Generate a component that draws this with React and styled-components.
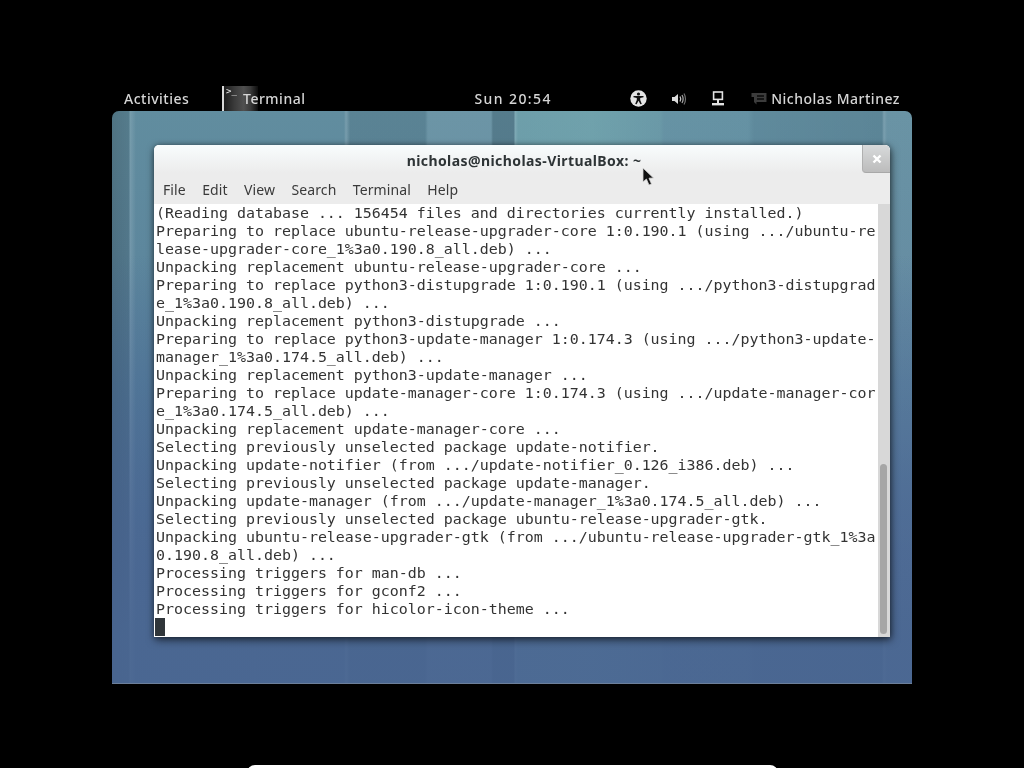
import React from 'react';
import styled, { createGlobalStyle } from 'styled-components';

const GlobalStyle = createGlobalStyle`
  html, body {
    margin: 0;
    padding: 0;
    background: #000;
    overflow: hidden;
  }
`;

const Screen = styled.div`
  position: relative;
  width: 1024px;
  height: 768px;
  background: #000;
  overflow: hidden;
  padding: 86px 112px 0;
  box-sizing: border-box;
  font-family: "Noto Sans", "Open Sans", sans-serif;
  filter: blur(0.3px);
`;

const TopBar = styled.div`
  display: flex;
  align-items: center;
  height: 25px;
  margin: 0 12px;
  color: #d6d6d6;
  font-size: 14px;
  font-weight: 500;
  letter-spacing: 0.5px;
`;

const BarLabel = styled.span`
  white-space: nowrap;
`;

const Activities = styled(BarLabel)`
  width: 65px;
`;

const AppButton = styled.div`
  display: flex;
  align-items: center;
  height: 25px;
  margin-left: 33px;
  width: 253px;
`;

const AppIcon = styled.div`
  width: 36px;
  height: 25px;
  margin-right: -15px;
  border-left: 2px solid #d8d8d8;
  box-sizing: border-box;
  background: linear-gradient(90deg, #1c1c1c 0%, #3a3a3a 30%, #505050 58%, #3a3a3a 78%, #0c0c0c 100%);
  color: #eee;
  font: 9px/9px "DejaVu Sans Mono", monospace;
  letter-spacing: 0;
  padding: 1px 0 0 2px;
`;

const Clock = styled(BarLabel)`
  width: 156px;
  letter-spacing: 1.4px;
`;

const StatusIcons = styled.div`
  display: flex;
  align-items: center;
  gap: 24px;
`;

const ChatGlyph = styled.svg`
  margin-left: 26px;
`;

const UserName = styled(BarLabel)`
  margin-left: 4px;
`;

const Desktop = styled.div`
  height: 573px;
  border-radius: 7px 7px 0 0;
  border-bottom: 1px solid #6c7f9a;
  padding: 34px 22px 0 42px;
  box-sizing: border-box;
  background:
    linear-gradient(180deg, rgba(74, 103, 146, 0) 25%, rgba(74, 103, 146, 0.55) 65%, rgba(74, 103, 146, 0.88) 92%),
    linear-gradient(90deg,
      rgba(0, 0, 0, 0.18) 0, rgba(0, 0, 0, 0.12) 17px,
      rgba(255, 255, 255, 0.14) 18px, rgba(255, 255, 255, 0) 24px,
      rgba(255, 255, 255, 0) 232px, rgba(255, 255, 255, 0.14) 234px,
      rgba(0, 0, 0, 0.07) 238px, rgba(0, 0, 0, 0.07) 313px,
      rgba(255, 255, 255, 0.07) 316px, rgba(255, 255, 255, 0.07) 379px,
      rgba(0, 0, 0, 0.12) 381px, rgba(0, 0, 0, 0.12) 402px,
      rgba(200, 240, 235, 0.3) 403px, rgba(150, 215, 205, 0.24) 406px,
      rgba(150, 215, 205, 0.28) 480px, rgba(150, 210, 205, 0.18) 548px,
      rgba(150, 200, 210, 0.1) 552px, rgba(150, 200, 210, 0.09) 636px,
      rgba(0, 0, 0, 0.02) 642px, rgba(0, 0, 0, 0.05) 770px,
      rgba(255, 255, 255, 0.16) 772px, rgba(255, 255, 255, 0.06) 775px,
      rgba(255, 255, 255, 0.06) 800px),
    linear-gradient(180deg, #618d9f 0%, #5d879d 25%, #527a99 50%, #4b6a94 78%, #4a658f 100%);
`;

const TermWindow = styled.div`
  width: 736px;
  height: 492px;
  border-radius: 5px 5px 0 0;
  background: #ececec;
  box-shadow: 1px 3px 9px rgba(0, 0, 0, 0.6), 0 0 5px rgba(0, 0, 0, 0.3);
  display: flex;
  flex-direction: column;
  overflow: hidden;
`;

const TitleBar = styled.div`
  position: relative;
  height: 28px;
  flex: none;
  display: flex;
  align-items: center;
  justify-content: center;
  background: linear-gradient(180deg, #f8fcfd 0%, #ececec 100%);
  color: #2e3436;
  font-size: 14px;
  font-weight: 700;
  letter-spacing: 0.42px;
  padding: 2px 0 0 4px;
  box-sizing: border-box;
`;

const CloseButton = styled.div`
  position: absolute;
  top: 0;
  right: 0;
  width: 28px;
  height: 28px;
  display: flex;
  align-items: center;
  justify-content: center;
  background: linear-gradient(180deg, #d8dadb 0%, #bcbcbc 100%);
  border-left: 1px solid #b0b0b0;
  border-bottom: 1px solid #a8a8a8;
  box-sizing: border-box;
  border-radius: 0 5px 0 4px;
`;

const MenuBar = styled.div`
  height: 31px;
  flex: none;
  display: flex;
  align-items: center;
  gap: 16.4px;
  padding: 2px 0 0 9px;
  box-sizing: border-box;
  color: #3a3a3a;
  font-size: 14px;
  letter-spacing: 0.1px;
`;

const Body = styled.div`
  flex: 1;
  display: flex;
  min-height: 0;
`;

const Output = styled.div`
  flex: 1;
  background: #fff;
  color: #333;
  font: 14.95px/18px "DejaVu Sans Mono", monospace;
  white-space: pre;
  padding: 0 0 0 2px;
  overflow: hidden;
`;

const Line = styled.div`
  height: 18px;
`;

const Caret = styled.div`
  width: 10px;
  height: 18px;
  margin-left: -1px;
  background: #30363a;
`;

const ScrollTrack = styled.div`
  width: 12px;
  flex: none;
  background: #d8d8d8;
  padding: 260px 3px 3px 2px;
  box-sizing: border-box;
`;

const ScrollThumb = styled.div`
  height: 100%;
  background: #a6a6a6;
  border-radius: 4px;
`;

const Pointer = styled.svg`
  position: absolute;
  left: 642px;
  top: 167px;
`;

const BottomEdge = styled.div`
  position: absolute;
  left: 247px;
  top: 765px;
  width: 531px;
  height: 12px;
  border-radius: 8px 8px 0 0;
  background: #fff;
`;

const lines = [
  '(Reading database ... 156454 files and directories currently installed.)',
  'Preparing to replace ubuntu-release-upgrader-core 1:0.190.1 (using .../ubuntu-re',
  'lease-upgrader-core_1%3a0.190.8_all.deb) ...',
  'Unpacking replacement ubuntu-release-upgrader-core ...',
  'Preparing to replace python3-distupgrade 1:0.190.1 (using .../python3-distupgrad',
  'e_1%3a0.190.8_all.deb) ...',
  'Unpacking replacement python3-distupgrade ...',
  'Preparing to replace python3-update-manager 1:0.174.3 (using .../python3-update-',
  'manager_1%3a0.174.5_all.deb) ...',
  'Unpacking replacement python3-update-manager ...',
  'Preparing to replace update-manager-core 1:0.174.3 (using .../update-manager-cor',
  'e_1%3a0.174.5_all.deb) ...',
  'Unpacking replacement update-manager-core ...',
  'Selecting previously unselected package update-notifier.',
  'Unpacking update-notifier (from .../update-notifier_0.126_i386.deb) ...',
  'Selecting previously unselected package update-manager.',
  'Unpacking update-manager (from .../update-manager_1%3a0.174.5_all.deb) ...',
  'Selecting previously unselected package ubuntu-release-upgrader-gtk.',
  'Unpacking ubuntu-release-upgrader-gtk (from .../ubuntu-release-upgrader-gtk_1%3a',
  '0.190.8_all.deb) ...',
  'Processing triggers for man-db ...',
  'Processing triggers for gconf2 ...',
  'Processing triggers for hicolor-icon-theme ...',
];

const menus = ['File', 'Edit', 'View', 'Search', 'Terminal', 'Help'];

function AccessIcon() {
  return (
    <svg width="17" height="17" viewBox="0 0 17 17">
      <circle cx="8.5" cy="8.5" r="8.2" fill="#e4e4e4" />
      <circle cx="8.5" cy="4" r="1.6" fill="#111" />
      <path d="M3.5 6 L13.5 6 L13.5 7.2 L10.2 8 L10.2 10 L11.8 14 L10.4 14.3 L8.5 10.8 L6.6 14.3 L5.2 14 L6.8 10 L6.8 8 L3.5 7.2 Z" fill="#111" />
    </svg>
  );
}

function VolumeIcon() {
  return (
    <svg width="16" height="14" viewBox="0 0 16 14" fill="none">
      <path d="M1 5 H3.5 L7 2 V12 L3.5 9 H1 Z" fill="#dcdcdc" />
      <path d="M9 4.5 Q10.5 7 9 9.5" stroke="#c8c8c8" strokeWidth="1.3" />
      <path d="M11 3 Q13.3 7 11 11" stroke="#a0a0a0" strokeWidth="1.3" />
      <path d="M13 1.5 Q16 7 13 12.5" stroke="#707070" strokeWidth="1.2" />
    </svg>
  );
}

function NetworkIcon() {
  return (
    <svg width="14" height="16" viewBox="0 0 14 16" fill="none">
      <rect x="2.6" y="1" width="8.8" height="7.4" stroke="#e2e2e2" strokeWidth="1.6" />
      <path d="M7 8.5 V12" stroke="#e2e2e2" strokeWidth="2" />
      <rect x="1" y="12" width="12" height="2.4" fill="#e2e2e2" />
    </svg>
  );
}

export default function App() {
  return (
    <Screen>
      <GlobalStyle />
      <TopBar>
        <Activities>Activities</Activities>
        <AppButton>
          <AppIcon>&gt;_</AppIcon>
          <BarLabel>Terminal</BarLabel>
        </AppButton>
        <Clock>Sun 20:54</Clock>
        <StatusIcons>
          <AccessIcon />
          <VolumeIcon />
          <NetworkIcon />
        </StatusIcons>
        <ChatGlyph width="16" height="13" viewBox="0 0 16 13">
          <path d="M0.5 1 H15.5 V10 H5.5 L5.5 12.5 L3 10 V5 H0.5 Z" fill="#3c3c3c" />
          <path d="M6 4 H13 M6 7 H13" stroke="#0a0a0a" strokeWidth="1.4" />
        </ChatGlyph>
        <UserName>Nicholas Martinez</UserName>
      </TopBar>
      <Desktop>
        <TermWindow>
          <TitleBar>
            nicholas@nicholas-VirtualBox: ~
            <CloseButton>
              <svg width="10" height="10" viewBox="0 0 10 10">
                <path d="M1.5 1.5 L8.5 8.5 M8.5 1.5 L1.5 8.5" stroke="#fff" strokeWidth="2.4" />
              </svg>
            </CloseButton>
          </TitleBar>
          <MenuBar>
            {menus.map((m) => (
              <span key={m}>{m}</span>
            ))}
          </MenuBar>
          <Body>
            <Output>
              {lines.map((l, i) => (
                <Line key={i}>{l}</Line>
              ))}
              <Caret />
            </Output>
            <ScrollTrack>
              <ScrollThumb />
            </ScrollTrack>
          </Body>
        </TermWindow>
      </Desktop>
      <Pointer width="13" height="20" viewBox="0 0 13 20">
        <path d="M1 1 L1 15 L4.4 12 L7 18 L9.5 17 L7 11.2 L11.5 11 Z" fill="#111" stroke="#d8d8d8" strokeWidth="0.8" />
      </Pointer>
      <BottomEdge />
    </Screen>
  );
}
